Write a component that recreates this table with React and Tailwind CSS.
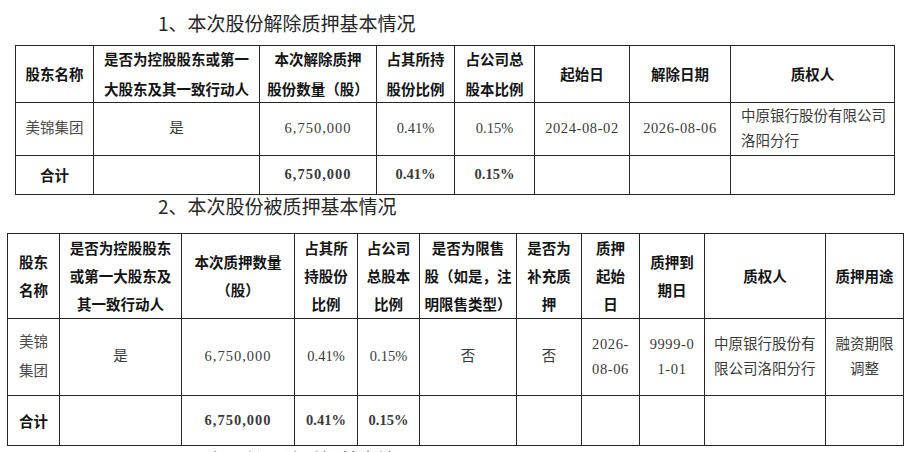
import React from "react";

const H = "font-['Noto_Sans_CJK_SC',sans-serif] font-bold text-[#141414]";
const D = "font-['Liberation_Serif','Noto_Sans_CJK_SC',serif] text-[#3a3a3a]";
const cell = "border border-[#262626] text-center align-middle p-0 whitespace-nowrap";

function L({ lines }) {
  return lines.map((t, i) => (
    <React.Fragment key={i}>
      {i > 0 && <br />}
      {t}
    </React.Fragment>
  ));
}

function Table1() {
  const widths = [78, 166, 117, 78, 80, 95, 101, 164];
  const head = [
    ["股东名称"],
    ["是否为控股股东或第一", "大股东及其一致行动人"],
    ["本次解除质押", "股份数量（股）"],
    ["占其所持", "股份比例"],
    ["占公司总", "股本比例"],
    ["起始日"],
    ["解除日期"],
    ["质权人"],
  ];
  return (
    <table className="ml-[15px] table-fixed border-collapse text-[14.5px]" style={{ width: 880 }}>
      <colgroup>
        {widths.map((w, i) => (
          <col key={i} style={{ width: w }} />
        ))}
      </colgroup>
      <tbody>
        <tr className="h-[56px]">
          {head.map((h, i) => (
            <td key={i} className={`${cell} ${H}`}>
              <div className="leading-[30px] -my-[2px]">
                <L lines={h} />
              </div>
            </td>
          ))}
        </tr>
        <tr className="h-[53px]">
          <td className={`${cell} ${D} text-[#4a4a4a]`}>美锦集团</td>
          <td className={`${cell} ${D}`}>是</td>
          <td className={`${cell} ${D} tracking-[1px]`}>6,750,000</td>
          <td className={`${cell} ${D}`}>0.41%</td>
          <td className={`${cell} ${D}`}>0.15%</td>
          <td className={`${cell} ${D} tracking-[0.6px]`}>2024-08-02</td>
          <td className={`${cell} ${D} tracking-[0.6px]`}>2026-08-06</td>
          <td className={`${cell} ${D} !text-left pl-[10px] leading-[25px]`}>
            中原银行股份有限公司
            <br />
            洛阳分行
          </td>
        </tr>
        <tr className="h-[39px]">
          <td className={`${cell} ${H}`}>合计</td>
          <td className={cell}></td>
          <td className={`${cell} ${D} font-bold text-[#1e1e1e] tracking-[1px]`}>6,750,000</td>
          <td className={`${cell} ${D} font-bold text-[#1e1e1e]`}>0.41%</td>
          <td className={`${cell} ${D} font-bold text-[#1e1e1e]`}>0.15%</td>
          <td className={cell}></td>
          <td className={cell}></td>
          <td className={cell}></td>
        </tr>
      </tbody>
    </table>
  );
}

function Table2() {
  const widths = [52, 122, 113, 63, 62, 97, 65, 58, 65, 121, 78];
  const head = [
    ["股东", "名称"],
    ["是否为控股股东", "或第一大股东及", "其一致行动人"],
    ["本次质押数量", "（股）"],
    ["占其所", "持股份", "比例"],
    ["占公司", "总股本", "比例"],
    ["是否为限售", "股（如是，注", "明限售类型）"],
    ["是否为", "补充质", "押"],
    ["质押", "起始", "日"],
    ["质押到", "期日"],
    ["质权人"],
    ["质押用途"],
  ];
  return (
    <table className="ml-[7px] table-fixed border-collapse text-[14.5px]" style={{ width: 897 }}>
      <colgroup>
        {widths.map((w, i) => (
          <col key={i} style={{ width: w }} />
        ))}
      </colgroup>
      <tbody>
        <tr className="h-[85px]">
          {head.map((h, i) => (
            <td key={i} className={`${cell} ${H} leading-[28px]`}>
              <L lines={h} />
            </td>
          ))}
        </tr>
        <tr className="h-[77px]">
          <td className={`${cell} ${D} text-[#4a4a4a] leading-[29px]`}>
            美锦
            <br />
            集团
          </td>
          <td className={`${cell} ${D}`}>是</td>
          <td className={`${cell} ${D} tracking-[1px]`}>6,750,000</td>
          <td className={`${cell} ${D}`}>0.41%</td>
          <td className={`${cell} ${D}`}>0.15%</td>
          <td className={`${cell} ${D}`}>否</td>
          <td className={`${cell} ${D}`}>否</td>
          <td className={`${cell} ${D} leading-[25px] tracking-[0.6px]`}>
            2026-
            <br />
            08-06
          </td>
          <td className={`${cell} ${D} leading-[25px] tracking-[0.6px]`}>
            9999-0
            <br />
            1-01
          </td>
          <td className={`${cell} ${D} !text-left pl-[9px] leading-[25px]`}>
            中原银行股份有
            <br />
            限公司洛阳分行
          </td>
          <td className={`${cell} ${D} leading-[25px]`}>
            融资期限
            <br />
            调整
          </td>
        </tr>
        <tr className="h-[50px]">
          <td className={`${cell} ${H}`}>合计</td>
          <td className={cell}></td>
          <td className={`${cell} ${D} font-bold text-[#1e1e1e] tracking-[1px]`}>6,750,000</td>
          <td className={`${cell} ${D} font-bold text-[#1e1e1e]`}>0.41%</td>
          <td className={`${cell} ${D} font-bold text-[#1e1e1e]`}>0.15%</td>
          <td className={cell}></td>
          <td className={cell}></td>
          <td className={cell}></td>
          <td className={cell}></td>
          <td className={cell}></td>
          <td className={cell}></td>
        </tr>
      </tbody>
    </table>
  );
}

export default function App() {
  const title = "font-['Noto_Sans_CJK_SC',sans-serif] text-[19px] text-[#262626] pl-[158px] whitespace-nowrap";
  return (
    <div className="w-[914px] h-[452px] overflow-hidden bg-white">
      <div className={`${title} h-[45px] leading-[45px]`}>1、本次股份解除质押基本情况</div>
      <Table1 />
      <div className={`${title} h-[38px] leading-[22px]`}>2、本次股份被质押基本情况</div>
      <Table2 />
      <div className={`${title} leading-[28px]`}>3、股东股份累计质押基本情况</div>
    </div>
  );
}
